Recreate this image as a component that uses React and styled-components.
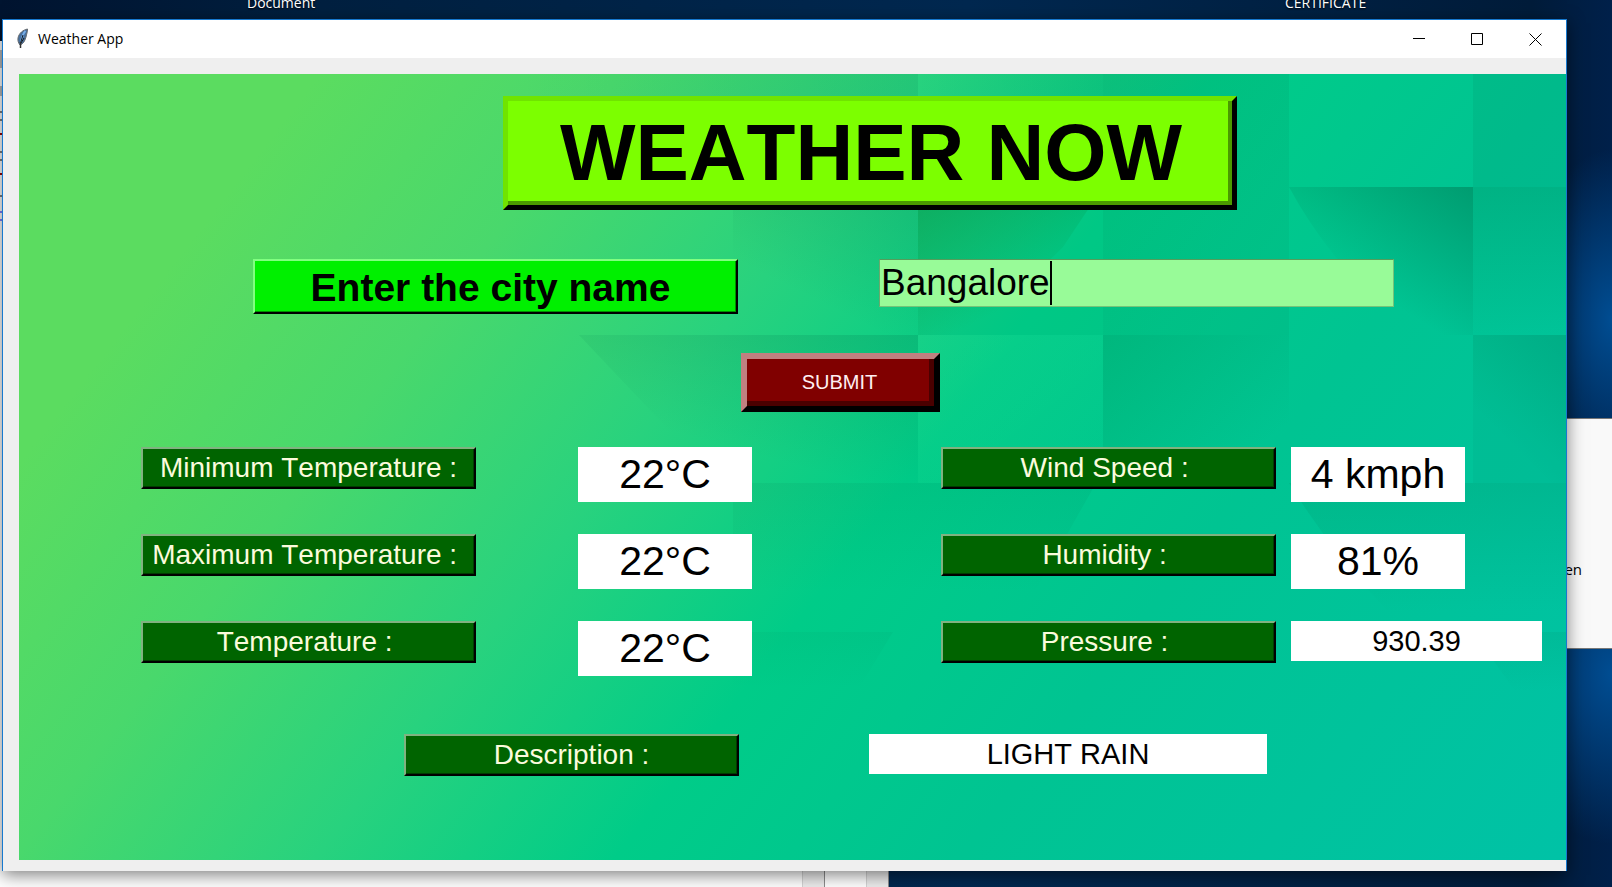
import React, { useState } from "react";
import styled, { createGlobalStyle } from "styled-components";

const GlobalStyle = createGlobalStyle`
  * { box-sizing: border-box; }
  body { margin: 0; background: #001f3f; }
`;

const sans = `"Liberation Sans", Arial, sans-serif`;
const systemSans = `"Open Sans", "Noto Sans", sans-serif`;

const Desktop = styled.main`
  position: relative;
  min-height: 100vh;
  overflow: hidden;
  display: flex;
  flex-direction: column;
  background:
    radial-gradient(ellipse 90px 170px at 100% 36%, #004d92, transparent),
    radial-gradient(ellipse 110px 170px at 100% 76%, #004d92, transparent),
    linear-gradient(90deg, #001430, #002040 20%, #002850 60%, #001c3a 95%, #00204a);
  font-family: ${sans};
`;

const ShortcutName = styled.span`
  position: absolute;
  top: -7px;
  left: ${(p) => p.$left};
  color: #fff;
  font: 14px/20px ${systemSans};
  text-shadow: 0 1px 2px #000;
`;

const BackWindow = styled.div`
  position: absolute;
  left: 0;
  top: 41px;
  bottom: 0;
  width: ${(p) => p.$width};
  border-right: 1px solid #8c8c8c;
  background: linear-gradient(90deg, #fff 0 calc(100% - 22px), #d4d4d4 0 calc(100% - 21px), #ececec 0);
`;

const EdgeMarks = styled.svg`
  position: absolute;
  left: 0;
  top: 41px;
`;

const Popup = styled.div`
  position: absolute;
  right: 0;
  top: 418px;
  width: 60px;
  height: 231px;
  padding: 139px 30px 0 0;
  border: 1px solid #777;
  border-right: 0;
  background: #f9f9f9;
  text-align: right;
  font: 15px/22px ${systemSans};
`;

const AppWindow = styled.section`
  position: relative;
  flex: 1;
  display: flex;
  flex-direction: column;
  margin: 19px 45px 16px 2px;
  border: 1px solid #1779cf;
  border-bottom: 0;
  background: #efefef;
  box-shadow: 0 4px 16px rgba(0, 0, 0, 0.5);
`;

const TitleBar = styled.header`
  display: flex;
  align-items: center;
  height: 38px;
  padding-left: 12px;
  padding-right: 2px;
  background: #fff;
`;

const WindowTitle = styled.span`
  flex: 1;
  padding-left: 7px;
  font: 14px/20px ${systemSans};
`;

const WindowButton = styled.button`
  display: grid;
  place-items: center;
  width: 58px;
  height: 38px;
  padding: 0;
  border: 0;
  background: none;
`;

const Canvas = styled.form`
  position: relative;
  isolation: isolate;
  flex: 1;
  margin: 16px 0 11px 16px;
  padding: 22px 0 24px;
`;

const Backdrop = styled.svg`
  position: absolute;
  inset: 0;
  z-index: -1;
  width: 100%;
  height: 100%;
`;

const Row = styled.div`
  display: grid;
  grid-template-columns: ${(p) => p.$columns};
  align-items: start;
  margin-top: ${(p) => p.$gap || "0"};
`;

const Readings = styled(Row)`
  grid-auto-rows: 55px;
  row-gap: 32px;
`;

const Heading = styled.h1`
  grid-column: 2;
  margin: 0;
  height: 114px;
  padding-left: 2px;
  border: 5px solid #70e400;
  border-right-color: #000;
  border-bottom-color: #000;
  box-shadow: inset -4px -4px #4b9a00;
  background: #7cff00;
  text-align: center;
  font: bold 80px/104px ${sans};
  font-kerning: none;
  white-space: nowrap;
`;

const CityLabel = styled.label`
  grid-column: 2;
  height: 55px;
  padding-right: 10px;
  border: 2px solid #80ff80;
  border-right-color: #000;
  border-bottom-color: #000;
  box-shadow: inset -1px -1px #009000;
  background: #00f000;
  text-align: center;
  font: bold 39px/53px ${sans};
  font-kerning: none;
  white-space: nowrap;
`;

const CityField = styled.div`
  grid-column: 4;
  position: relative;
`;

const CityInput = styled.input`
  display: block;
  width: 100%;
  height: 48px;
  padding: 0 0 0 1px;
  border: 1px solid #75c478;
  border-top-color: #559d5a;
  border-left-color: #6aa96c;
  border-radius: 0;
  outline: 0;
  background: #98fb98;
  color: #000;
  caret-color: transparent;
  font: 37px/44px ${sans};
  font-kerning: none;
`;

const Caret = styled.span`
  position: absolute;
  left: 171px;
  top: 2px;
  width: 2px;
  height: 44px;
  background: #000;
`;

const SubmitButton = styled.button`
  grid-column: 2;
  height: 59px;
  padding: 0 2px 2px 0;
  border: 6px solid #c08080;
  border-right-color: #000;
  border-bottom-color: #000;
  border-radius: 0;
  box-shadow: inset -5px -5px #4a0000;
  background: #800000;
  color: #ffeef0;
  font: 20px/24px ${sans};
  font-kerning: none;
`;

const ReadingLabel = styled.label`
  grid-column: ${(p) => p.$col};
  height: 42px;
  border: 2px solid #80b280;
  border-right-color: #000;
  border-bottom-color: #000;
  box-shadow: inset -1px -1px #003c00;
  background: #006400;
  color: #fbfbdc;
  text-align: center;
  font: 28px/38px ${sans};
  font-kerning: none;
  white-space: pre;
`;

const ReadingValue = styled.output`
  grid-column: ${(p) => p.$col};
  width: ${(p) => (p.$wide ? "100%" : "174px")};
  background: #fff;
  text-align: center;
  font: ${(p) => (p.$wide ? "29px/40px" : "41px/55px")} ${sans};
  font-kerning: none;
  white-space: nowrap;
`;

const readings = [
  { id: "min", label: "Minimum Temperature :", value: "22°C", col: 2 },
  { id: "wind", label: "Wind Speed : ", value: "4 kmph", col: 6 },
  { id: "max", label: "Maximum Temperature : ", value: "22°C", col: 2 },
  { id: "humidity", label: "Humidity : ", value: "81%", col: 6 },
  { id: "temp", label: "Temperature : ", value: "22°C", col: 2 },
  { id: "pressure", label: "Pressure : ", value: "930.39", col: 6, wide: true },
];

function Feather() {
  return (
    <svg width="16" height="22" viewBox="0 0 16 22" aria-hidden="true">
      <path d="M12.5 1C8 2 4 5 3 10c-.4 3 .5 5 2 7 3-1 5-4 6-8 .6-3 1.500-5 1.500-8z" fill="#47709e" stroke="#65696e" />
      <path d="M10.500 3C8 5 7 9 6 14" stroke="#78aee8" strokeWidth="2" fill="none" />
      <path d="M8 7L5.500 15M9 10l-3 5" stroke="#101820" strokeWidth="1" fill="none" />
      <path d="M5.500 14v6" stroke="#333" strokeWidth="1.500" />
    </svg>
  );
}

function Shade({ id, x1, y1, x2, y2, opacity, color = "#006c48" }) {
  return (
    <linearGradient id={id} x1={x1} y1={y1} x2={x2} y2={y2}>
      <stop offset="0" stopColor={color} stopOpacity={opacity} />
      <stop offset="1" stopColor={color} stopOpacity="0" />
    </linearGradient>
  );
}

function Tiles() {
  return (
    <Backdrop viewBox="0 0 1547 786" preserveAspectRatio="none" aria-hidden="true">
      <defs>
        <linearGradient id="base" gradientUnits="userSpaceOnUse" x1="0" y1="0" x2="1344" y2="1038">
          <stop offset=".14" stopColor="#5bdc60" />
          <stop offset=".28" stopColor="#49d86c" />
          <stop offset=".42" stopColor="#28d27e" />
          <stop offset=".56" stopColor="#00cc88" />
          <stop offset=".72" stopColor="#00c492" />
          <stop offset="1" stopColor="#00c2a6" />
        </linearGradient>
        <Shade id="fromRight" x1="1" y1="0" x2="0" y2="0" opacity=".3" />
        <Shade id="down" x1="0" y1="0" x2="0" y2="1" opacity=".22" />
        <Shade id="downRight" x1="0" y1="0" x2=".5" y2=".8" opacity=".5" color="#008a3c" />
        <Shade id="downRightSoft" x1="0" y1="0" x2=".8" y2=".8" opacity=".2" />
        <Shade id="downLeft" x1="1" y1="0" x2=".45" y2=".7" opacity=".45" />
        <Shade id="downLeftSoft" x1="1" y1="0" x2=".5" y2=".8" opacity=".2" />
        <Shade id="light" x1="0" y1="0" x2="1" y2="1" opacity=".07" color="#8cffb0" />
      </defs>
      <rect width="1547" height="786" fill="url(#base)" />
      <path d="M500 0H899V113H500z" fill="url(#fromRight)" opacity=".4" />
      <path d="M899 0h185v113H899z" fill="url(#fromRight)" opacity=".4" />
      <path d="M1084 0h186v261h-186z" fill="#00784a" opacity=".08" />
      <path d="M1084 0h186v261h-186z" fill="url(#downRightSoft)" opacity=".4" />
      <path d="M1454 0h93v113h-93z" fill="#007c60" opacity=".14" />
      <path d="M714 113h185v148H714z" fill="url(#downLeftSoft)" />
      <path d="M899 113h185v148H899z" fill="#008050" opacity=".06" />
      <path d="M899 113h185l-40 60-90 88h-55z" fill="url(#downRight)" />
      <path d="M1270 113h184v148h-62q-80-70-122-148z" fill="url(#downLeft)" />
      <path d="M1454 113h93v148h-93z" fill="url(#down)" opacity=".9" />
      <path d="M560 261h339v148H700z" fill="url(#downLeftSoft)" />
      <path d="M899 261h185v148H899z" fill="url(#light)" />
      <path d="M1084 261h186v148h-186z" fill="url(#downRightSoft)" />
      <path d="M1454 261h93v148h-93z" fill="url(#downLeftSoft)" />
      <path d="M1454 261h93v148h-93z" fill="#007c60" opacity=".08" />
      <path d="M714 409h363l-62 110H714z" fill="url(#down)" opacity=".4" />
      <path d="M1270 409h277v130h-177q-60-65-100-130z" fill="url(#down)" opacity=".6" />
      <path d="M714 558h160l-34 56H714z" fill="url(#down)" opacity=".25" />
      <path d="M1454 558h93v60h-50z" fill="url(#down)" opacity=".4" />
    </Backdrop>
  );
}

export default function App() {
  const [city, setCity] = useState("Bangalore");
  return (
    <Desktop>
      <GlobalStyle />
      <ShortcutName $left="247px">Document</ShortcutName>
      <ShortcutName $left="1285px">CERTIFICATE</ShortcutName>
      <BackWindow $width="889px" />
      <BackWindow $width="825px" />
      <EdgeMarks width="2" height="200" aria-hidden="true">
        <path d="M1 9v18M1 45v10" stroke="#777" />
        <path d="M0 71h2M0 79h2M0 111h2M0 119h2M0 155h2" stroke="#000" />
        <path d="M0 93h2M0 133h2" stroke="#900" strokeWidth="2" />
        <path d="M0 171h2M0 179h2" stroke="#00f" />
      </EdgeMarks>
      <Popup>en</Popup>
      <AppWindow>
        <TitleBar>
          <Feather />
          <WindowTitle>Weather App</WindowTitle>
          <WindowButton aria-label="Minimize">
            <svg width="12" height="12"><path d="M0 5.500h12" stroke="#000" /></svg>
          </WindowButton>
          <WindowButton aria-label="Maximize">
            <svg width="12" height="12"><path d="M.5.5h11v11H.5z" fill="none" stroke="#000" /></svg>
          </WindowButton>
          <WindowButton aria-label="Close">
            <svg width="13" height="13"><path d="M.5.5l12 12M12.500.5l-12 12" stroke="#000" /></svg>
          </WindowButton>
        </TitleBar>
        <Canvas onSubmit={(e) => e.preventDefault()}>
          <Tiles />
          <Row $columns="484fr 734px 329fr">
            <Heading>WEATHER NOW</Heading>
          </Row>
          <Row $gap="49px" $columns="234fr 485px 141fr 515px 172fr">
            <CityLabel htmlFor="city">Enter the city name</CityLabel>
            <CityField>
              <CityInput id="city" value={city} onChange={(e) => setCity(e.target.value)} />
              <Caret />
            </CityField>
          </Row>
          <Row $gap="39px" $columns="722fr 199px 626fr">
            <SubmitButton type="submit">SUBMIT</SubmitButton>
          </Row>
          <Readings $gap="35px" $columns="122fr 335px 102fr 174px 189fr 335px 15fr 251px 24fr">
            {readings.map((r) => (
              <React.Fragment key={r.id}>
                <ReadingLabel htmlFor={r.id} $col={r.col}>{r.label}</ReadingLabel>
                <ReadingValue id={r.id} $col={r.col + 2} $wide={r.wide}>{r.value}</ReadingValue>
              </React.Fragment>
            ))}
          </Readings>
          <Row $gap="58px" $columns="385fr 335px 130fr 398px 299fr">
            <ReadingLabel htmlFor="description" $col={2}>Description :</ReadingLabel>
            <ReadingValue id="description" $col={4} $wide>LIGHT RAIN</ReadingValue>
          </Row>
        </Canvas>
      </AppWindow>
    </Desktop>
  );
}
